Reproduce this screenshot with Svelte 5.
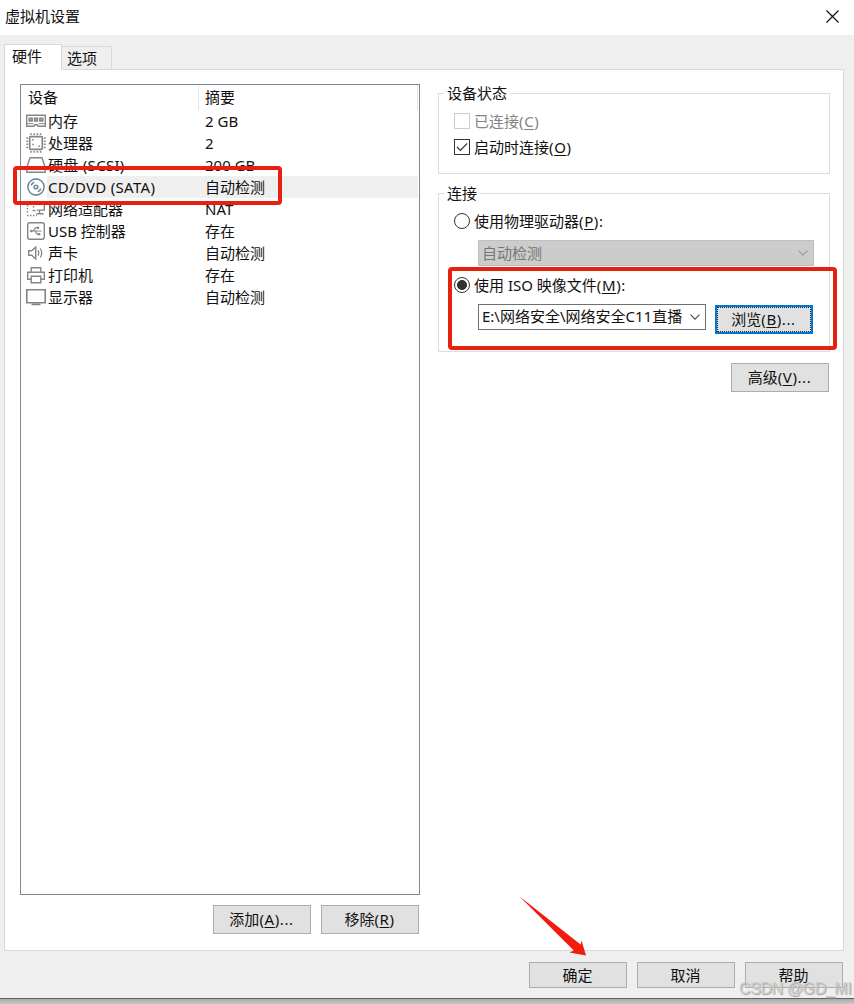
<script>
  const devices = [
    { icon: 'memory', name: '内存', summary: '2 GB' },
    { icon: 'cpu', name: '处理器', summary: '2' },
    { icon: 'disk', name: '硬盘 (SCSI)', summary: '200 GB', wide: true },
    { icon: 'cd', name: 'CD/DVD (SATA)', summary: '自动检测', selected: true, wide: true },
    { icon: 'network', name: '网络适配器', summary: 'NAT' },
    { icon: 'usb', name: 'USB 控制器', summary: '存在' },
    { icon: 'sound', name: '声卡', summary: '自动检测' },
    { icon: 'printer', name: '打印机', summary: '存在' },
    { icon: 'display', name: '显示器', summary: '自动检测' }
  ];
</script>

{#snippet deviceIcon(kind)}
  <svg class="icon" width="22" height="22" viewBox="0 0 22 22" fill="none" stroke="#858585" stroke-width="1.4">
    {#if kind === 'memory'}
      <path d="M1.7 5.2h18.6v11h-7.2l-1-1.4h-2.2l-1 1.4H1.7z" />
      <path d="M4.2 8.2h3v2.8h-3zM9.5 8.2h3v2.8h-3zM14.8 8.2h3v2.8h-3z" fill="#aaa" />
      <path d="M2 13.7h6.5M13.5 13.7H20" stroke-width="1" />
    {:else if kind === 'cpu'}
      <rect x="4.7" y="4.7" width="12.6" height="12.6" rx="0.8" stroke-width="1.7" />
      <path d="M5.2 2.2h12M5.2 19.8h12" stroke-dasharray="1.5 1.7" stroke-width="1.8" />
      <path d="M2.2 5.2v12M19.8 5.2v12" stroke-dasharray="1.5 1.7" stroke-width="1.8" />
      <path d="M7 7.8h1.600M7.3 12.5h1.5M13.3 14.2h1.5" stroke-width="1.5" />
    {:else if kind === 'disk'}
      <path d="M5 3.7h12l3.2 9.8v4.8H1.8v-4.8z" />
    {:else if kind === 'cd'}
      <g stroke="#6e8ba1" stroke-width="1.6">
        <circle cx="11" cy="11" r="8.1" />
        <circle cx="11" cy="11" r="1.8" />
        <path d="M6.2 9.5a5 5 0 0 1 3.1-3.300M15.8 12.5a5 5 0 0 1-3.100 3.300" stroke-width="1.7" />
      </g>
    {:else if kind === 'network'}
      <path d="M9.5 4.7h9.8v7.4h-7.5M14.5 12.3v3.2M11.5 15.700h7" />
      <path d="M2 4h6M2.5 4v11M8.5 8v3" stroke-dasharray="1.5 1.5" />
      <path d="M2 17.5h10" stroke-dasharray="1.5 1.5" />
      <path d="M7.5 12.5h3" />
    {:else if kind === 'usb'}
      <rect x="2.7" y="2.7" width="16.6" height="16.6" rx="2" />
      <path d="M6 11h10.5M8 11l2.5-3.2h2.3M10 11l2.200 3.200h1.600" stroke-width="1.2" />
      <circle cx="6.3" cy="11" r="1.3" fill="#858585" stroke="none" />
      <circle cx="13" cy="7.8" r="1.2" fill="#858585" stroke="none" />
      <rect x="13" y="13" width="2.3" height="2.3" fill="#858585" stroke="none" />
    {:else if kind === 'sound'}
      <path d="M3.7 8.7h3l4-3.700v12l-4-3.700h-3z" />
      <path d="M13 8.3q1.6 2.7 0 5.4M15.3 6.5q2.8 4.5 0 9" stroke-width="1.2" />
    {:else if kind === 'printer'}
      <path d="M6.2 8V3.7h9.6V8M6 15.3H2.7V8.2h16.6v7.1H16" />
      <path d="M6.2 12.2h9.6v6.6H6.2z" />
    {:else}
      <path d="M1.8 3.7h18.4v13.100H1.800zM6.500 18.500h9" stroke-width="1.600" />
    {/if}
  </svg>
{/snippet}

{#snippet chevron(color)}
  <svg width="10" height="6" viewBox="0 0 10 6" fill="none" stroke={color} stroke-width="1.1"><path d="M.5.7 5 5.2 9.5.7" /></svg>
{/snippet}

{#snippet label(text, key, tail)}
  <span>{text}<span class="key">(<u>{key}</u>){tail}</span></span>
{/snippet}

<div class="window">
  <header class="titlebar">
    <span>虚拟机设置</span>
    <svg width="13" height="13" viewBox="0 0 13 13" stroke="#111" stroke-width="1.2"><path d="M.5.5l12 12M12.5.5l-12 12" /></svg>
  </header>

  <div class="body">
    <nav class="tabs">
      <div class="tab active">硬件</div>
      <div class="tab">选项</div>
    </nav>

    <main class="panel">
      <section class="left">
        <div class="list">
          <div class="list-head">
            <span class="col-device">设备</span>
            <span class="col-summary">摘要</span>
          </div>
          {#each devices as d}
            <div class="row">
              {@render deviceIcon(d.icon)}
              <div class="cells" class:selected={d.selected}>
                <span class="name" class:wide={d.wide}>{d.name}</span>
                <span>{d.summary}</span>
              </div>
            </div>
          {/each}
        </div>
        <div class="list-actions">
          <button>{@render label('添加', 'A', '...')}</button>
          <button>{@render label('移除', 'R', '')}</button>
        </div>
      </section>

      <section class="right">
        <fieldset class="status">
          <legend>设备状态</legend>
          <div class="option disabled"><i class="box"></i>{@render label('已连接', 'C', '')}</div>
          <div class="option second">
            <i class="box"><svg width="14" height="14" viewBox="0 0 14 14" fill="none" stroke="#333" stroke-width="1.3"><path d="M2 7l3.4 3.4L12.2 3.4" /></svg></i>
            {@render label('启动时连接', 'O', '')}
          </div>
        </fieldset>

        <fieldset class="connection">
          <legend>连接</legend>
          <div class="option"><i class="radio"></i>{@render label('使用物理驱动器', 'P', ':')}</div>
          <div class="combo off"><span>自动检测</span>{@render chevron('#9c9c9c')}</div>
          <div class="option iso"><i class="radio on"></i>{@render label('使用 ISO 映像文件', 'M', ':')}</div>
          <div class="file">
            <div class="combo"><span>E:\网络安全\网络安全C11直播</span>{@render chevron('#444')}</div>
            <button class="focus">{@render label('浏览', 'B', '...')}</button>
          </div>
        </fieldset>

        <button class="advanced">{@render label('高级', 'V', '...')}</button>
      </section>
    </main>

    <footer>
      <button>确定</button>
      <button>取消</button>
      <button>帮助</button>
    </footer>
  </div>
  <div class="shadow"></div>

  <div class="mark mark-device"></div>
  <div class="mark mark-iso"></div>
  <svg class="arrow" width="70" height="64" viewBox="0 0 70 64"><path d="M1 1 62.6 49.5 63.5 45.5 68 60.5 51.5 57.5 55.8 55.5z" fill="#f31b0c" /></svg>
  <div class="watermark">CSDN @GD_MI</div>
</div>

<style>
  :global(body) { background: #fff; }
  * { box-sizing: border-box; }
  .window {
    position: relative;
    width: 854px;
    height: 1004px;
    overflow: hidden;
    display: flex;
    flex-direction: column;
    font: 15px/22px "Noto Sans", "Noto Sans CJK SC", sans-serif;
    color: #111;
    white-space: nowrap;
  }
  .titlebar {
    height: 35px;
    flex: none;
    display: flex;
    justify-content: space-between;
    align-items: center;
    padding: 0 15px 3px 5px;
    background: #fff;
  }
  .body {
    flex: 1;
    display: flex;
    flex-direction: column;
    background: #efefef;
    padding: 9px 10px 0 4px;
  }
  .tabs { display: flex; align-items: flex-end; height: 25px; flex: none; }
  .tab {
    width: 50px;
    height: 23px;
    border: 1px solid #d9d9d9;
    border-left: 0;
    border-bottom: 0;
    padding-left: 5px;
  }
  .tab.active {
    width: 58px;
    height: 26px;
    margin-bottom: -1px;
    border-left: 1px solid #d9d9d9;
    background: #fff;
    padding-left: 7px;
    z-index: 1;
  }
  .panel {
    height: 882px;
    flex: none;
    display: flex;
    gap: 18px;
    background: #fff;
    border: 1px solid #d9d9d9;
    padding: 14px 13px 0 15px;
  }
  .left { width: 400px; }
  .list { height: 811px; border: 1px solid #828790; padding-right: 1px; }
  .list-head { display: flex; height: 25px; line-height: 25px; }
  .col-device { width: 178px; padding-left: 7px; border-right: 1px solid #e5e5e5; }
  .col-summary { flex: 1; padding-left: 6px; border-right: 1px solid #e5e5e5; }
  .row { display: flex; height: 22px; padding-left: 4px; }
  .icon { flex: none; }
  .cells { flex: 1; display: flex; padding-left: 1px; }
  .cells.selected { background: #efefef; }
  .name { width: 157px; }
  .wide { letter-spacing: 0.3px; }
  .key { letter-spacing: 0.6px; }
  .list-actions { display: flex; justify-content: flex-end; gap: 10px; padding: 10px 1px 0 0; }
  button {
    width: 98px;
    height: 29px;
    border: 1px solid #adadad;
    background: #e1e1e1;
    color: #111;
    font: inherit;
    line-height: 20px;
    padding: 0 1px 2px 0;
    text-align: center;
  }
  u { text-decoration: underline; text-decoration-thickness: 1px; text-underline-offset: 2px; }
  .right { width: 392px; display: flex; flex-direction: column; }
  fieldset { margin: 0; padding: 0 0 0 15px; border: 1px solid #dcdcdc; min-width: 0; }
  legend { margin-left: -10px; padding: 0 3px; height: 19px; line-height: 18px; }
  .status { height: 90px; }
  .connection { height: 168px; margin-top: 10px; }
  .option { display: flex; align-items: center; height: 22px; }
  .status .option { margin-top: 7px; }
  .status .second { margin-top: 4px; }
  .disabled { color: #838383; }
  .box, .radio { width: 16px; height: 16px; border: 1px solid #333; margin-right: 4px; background: #fff; flex: none; display: block; }
  .box svg { display: block; }
  .disabled .box { border-color: #ccc; }
  .radio { border-radius: 50%; }
  .radio.on { background: radial-gradient(circle, #333 0 4.6px, #fff 5.3px); }
  .connection > .option { margin-top: 7px; }
  .combo {
    display: flex;
    align-items: center;
    justify-content: space-between;
    height: 26px;
    border: 1px solid #707070;
    padding: 0 5px 1px 4px;
    background: #fff;
  }
  .combo span { margin: -2px 0 0 -1px; }
  .combo.off { width: 336px; margin: 8px 0 0 24px; background: #ccc; border-color: #bfbfbf; color: #777; }
  .combo.off span { margin-top: 0; }
  .connection > .iso { margin-top: 8px; }
  .file { display: flex; gap: 9px; margin: 8px 0 0 24px; }
  .file .combo { width: 228px; }
  .focus { margin-top: 1px; border: 2px solid #0078d7; outline: 1px dotted #222; outline-offset: -3px; line-height: 18px; }
  .advanced { margin: 11px 0 0 293px; }
  footer { display: flex; justify-content: flex-end; gap: 10px; padding: 11px 1px 0 0; }
  footer button { height: 26px; line-height: 18px; padding-bottom: 0; }
  .shadow { height: 6px; flex: none; border-top: 1px solid #606464; background: linear-gradient(#aaa, #c8c8c8); }
  .mark { position: absolute; border: 4px solid #e8200f; border-radius: 4px; }
  .mark-device { left: 13px; top: 166px; width: 269px; height: 39px; }
  .mark-iso { left: 448px; top: 267px; width: 389px; height: 83px; }
  .arrow { position: absolute; left: 518px; top: 895px; }
  .watermark {
    position: absolute;
    left: 739px;
    top: 978px;
    font: 16px/22px "Liberation Sans", sans-serif;
    letter-spacing: -0.4px;
    color: #cdcdcd;
    text-shadow: 1px 1px 1px #a0a0a0;
  }
</style>
